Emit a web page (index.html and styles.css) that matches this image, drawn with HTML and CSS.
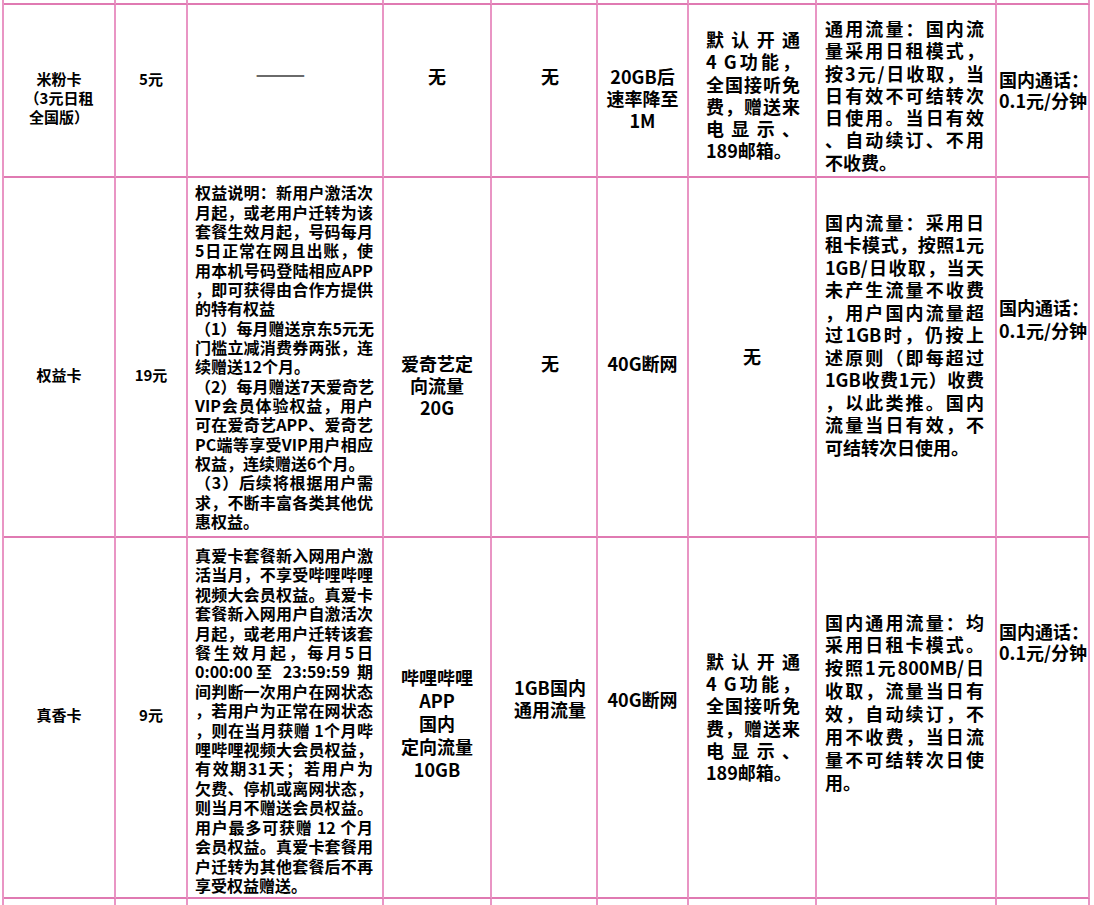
FILE: index.html
```html
<!DOCTYPE html>
<html lang="zh-CN">
<head>
<meta charset="utf-8">
<title>套餐资费说明</title>
<link rel="stylesheet" href="styles.css">
</head>
<body>
<div class="sheet">
  <div class="row edge-top">
    <div class="cell"></div><div class="cell"></div><div class="cell"></div><div class="cell"></div><div class="cell"></div><div class="cell"></div><div class="cell"></div><div class="cell"></div><div class="cell"></div>
  </div>

  <div class="row r1">
    <div class="cell c-name"><span class="ln">米粉卡</span><span class="ln">（3元日租</span><span class="ln">全国版）</span></div>
    <div class="cell c-fee">5元</div>
    <div class="cell c-rights"><span class="dash">——</span></div>
    <div class="cell c-dir">无</div>
    <div class="cell c-gen">无</div>
    <div class="cell c-limit"><span class="ln">20GB后</span><span class="ln">速率降至</span><span class="ln">1M</span></div>
    <div class="cell c-serv">
      <span class="ln j">默认开通</span>
      <span class="ln j">4 G功能，</span>
      <span class="ln j">全国接听免</span>
      <span class="ln j">费，赠送来</span>
      <span class="ln j">电显示、</span>
      <span class="ln">189邮箱。</span>
    </div>
    <div class="cell c-over">
      <span class="ln j">通用流量：国内流</span>
      <span class="ln j">量采用日租模式，</span>
      <span class="ln j">按3元/日收取，当</span>
      <span class="ln j">日有效不可结转次</span>
      <span class="ln j">日使用。当日有效</span>
      <span class="ln j">、自动续订、不用</span>
      <span class="ln">不收费。</span>
    </div>
    <div class="cell c-call"><span class="ln">国内通话：</span><span class="ln">0.1元/分钟</span></div>
  </div>

  <div class="row r2">
    <div class="cell c-name">权益卡</div>
    <div class="cell c-fee">19元</div>
    <div class="cell c-rights">
      <span class="ln j">权益说明：新用户激活次</span>
      <span class="ln j">月起，或老用户迁转为该</span>
      <span class="ln j">套餐生效月起，号码每月</span>
      <span class="ln j">5日正常在网且出账，使</span>
      <span class="ln j">用本机号码登陆相应APP</span>
      <span class="ln j">，即可获得由合作方提供</span>
      <span class="ln">的特有权益</span>
      <span class="ln j">（1）每月赠送京东5元无</span>
      <span class="ln j">门槛立减消费券两张，连</span>
      <span class="ln">续赠送12个月。</span>
      <span class="ln j">（2）每月赠送7天爱奇艺</span>
      <span class="ln j">VIP会员体验权益，用户</span>
      <span class="ln j">可在爱奇艺APP、爱奇艺</span>
      <span class="ln j">PC端等享受VIP用户相应</span>
      <span class="ln">权益，连续赠送6个月。</span>
      <span class="ln j">（3）后续将根据用户需</span>
      <span class="ln j">求，不断丰富各类其他优</span>
      <span class="ln">惠权益。</span>
    </div>
    <div class="cell c-dir"><span class="ln">爱奇艺定</span><span class="ln">向流量</span><span class="ln">20G</span></div>
    <div class="cell c-gen">无</div>
    <div class="cell c-limit">40G断网</div>
    <div class="cell c-serv c-serv-none">无</div>
    <div class="cell c-over">
      <span class="ln j">国内流量：采用日</span>
      <span class="ln j">租卡模式，按照1元</span>
      <span class="ln j">1GB/日收取，当天</span>
      <span class="ln j">未产生流量不收费</span>
      <span class="ln j">，用户国内流量超</span>
      <span class="ln j">过1GB时，仍按上</span>
      <span class="ln j">述原则（即每超过</span>
      <span class="ln j">1GB收费1元）收费</span>
      <span class="ln j">，以此类推。国内</span>
      <span class="ln j">流量当日有效，不</span>
      <span class="ln">可结转次日使用。</span>
    </div>
    <div class="cell c-call"><span class="ln">国内通话：</span><span class="ln">0.1元/分钟</span></div>
  </div>

  <div class="row r3">
    <div class="cell c-name">真香卡</div>
    <div class="cell c-fee">9元</div>
    <div class="cell c-rights">
      <span class="ln j">真爱卡套餐新入网用户激</span>
      <span class="ln j">活当月，不享受哔哩哔哩</span>
      <span class="ln j">视频大会员权益。真爱卡</span>
      <span class="ln j">套餐新入网用户自激活次</span>
      <span class="ln j">月起，或老用户迁转该套</span>
      <span class="ln j">餐生效月起，每月5日</span>
      <span class="ln j">0:00:00至 23:59:59 期</span>
      <span class="ln j">间判断一次用户在网状态</span>
      <span class="ln j">，若用户为正常在网状态</span>
      <span class="ln j">，则在当月获赠 1个月哔</span>
      <span class="ln j">哩哔哩视频大会员权益，</span>
      <span class="ln j">有效期31天；若用户为</span>
      <span class="ln j">欠费、停机或离网状态，</span>
      <span class="ln j">则当月不赠送会员权益。</span>
      <span class="ln j">用户最多可获赠 12 个月</span>
      <span class="ln j">会员权益。真爱卡套餐用</span>
      <span class="ln j">户迁转为其他套餐后不再</span>
      <span class="ln">享受权益赠送。</span>
    </div>
    <div class="cell c-dir"><span class="ln">哔哩哔哩</span><span class="ln">APP</span><span class="ln">国内</span><span class="ln">定向流量</span><span class="ln">10GB</span></div>
    <div class="cell c-gen"><span class="ln">1GB国内</span><span class="ln">通用流量</span></div>
    <div class="cell c-limit">40G断网</div>
    <div class="cell c-serv">
      <span class="ln j">默认开通</span>
      <span class="ln j">4 G功能，</span>
      <span class="ln j">全国接听免</span>
      <span class="ln j">费，赠送来</span>
      <span class="ln j">电显示、</span>
      <span class="ln">189邮箱。</span>
    </div>
    <div class="cell c-over">
      <span class="ln j">国内通用流量：均</span>
      <span class="ln j">采用日租卡模式。</span>
      <span class="ln j">按照1元800MB/日</span>
      <span class="ln j">收取，流量当日有</span>
      <span class="ln j">效，自动续订，不</span>
      <span class="ln j">用不收费，当日流</span>
      <span class="ln j">量不可结转次日使</span>
      <span class="ln">用。</span>
    </div>
    <div class="cell c-call"><span class="ln">国内通话：</span><span class="ln">0.1元/分钟</span></div>
  </div>

  <div class="row edge-bottom">
    <div class="cell"></div><div class="cell"></div><div class="cell"></div><div class="cell"></div><div class="cell"></div><div class="cell"></div><div class="cell"></div><div class="cell"></div><div class="cell"></div>
  </div>
</div>
</body>
</html>
```

FILE: styles.css
```css
html, body {
  margin: 0;
  padding: 0;
  background: #ffffff;
}

body {
  height: 905px;
  overflow: hidden;
  font-family: "Noto Sans CJK SC", "Noto Sans", sans-serif;
  font-weight: 700;
  color: #000000;
  text-spacing-trim: space-all;
  text-autospace: no-autospace;
}

.sheet {
  display: grid;
  grid-template-columns: 112px 72px 196px 108px 106px 91px 128px 180px 93px;
  grid-template-rows: 5px 173px 360px 361px 40px;
  width: max-content;
  margin-left: 2px;
  border-left: 2px solid #e995c4;
}

.row {
  display: contents;
}

.cell {
  box-sizing: border-box;
  min-width: 0;
  border-right: 2px solid #e995c4;
  border-bottom: 2px solid #e07ab2;
  font-size: 18px;
  line-height: 22px;
}

.edge-bottom .cell {
  border-bottom: none;
}

.ln {
  display: block;
  white-space: nowrap;
}

.j {
  text-align: justify;
  text-align-last: justify;
}

/* columns */
.c-name,
.c-fee {
  font-size: 15px;
  line-height: 19px;
  text-align: center;
}

.c-rights {
  font-size: 16px;
  line-height: 19.4px;
  padding: 0 9px 0 7px;
}

.c-dir,
.c-limit {
  text-align: center;
}

.c-gen {
  text-align: center;
  padding-left: 12px;
}

.c-serv {
  padding: 0 15px 0 17px;
}

.c-serv-none {
  text-align: center;
  padding: 0;
}

.c-over {
  padding: 0 11px 0 8px;
}

.c-call {
  padding-left: 2px;
  white-space: nowrap;
}

.dash {
  display: block;
  text-align: center;
  font-size: 30px;
  line-height: 24px;
  font-weight: 400;
  color: #6a6a6a;
}

/* row 1 : 米粉卡 */
.r1 > .c-name { padding-top: 64px; }
.r1 > .c-fee { padding-top: 64px; }
.r1 > .c-rights { padding-top: 54px; padding-left: 0; }
.r1 > .c-dir,
.r1 > .c-gen,
.r1 > .c-limit { padding-top: 60px; }
.r1 > .c-serv { padding-top: 23px; line-height: 22.3px; }
.r1 > .c-over { padding-top: 12px; line-height: 22.3px; }
.r1 > .c-call { padding-top: 63.5px; line-height: 21px; }

/* row 2 : 权益卡 */
.r2 > .c-name,
.r2 > .c-fee { padding-top: 186.5px; }
.r2 > .c-rights { padding-top: 5.3px; line-height: 19.35px; }
.r2 > .c-dir,
.r2 > .c-gen,
.r2 > .c-limit { padding-top: 174px; }
.r2 > .c-serv { padding-top: 167px; }
.r2 > .c-over { padding-top: 32.8px; line-height: 22.5px; }
.r2 > .c-call { padding-top: 117.5px; line-height: 23px; }

/* row 3 : 真香卡 */
.r3 > .c-name,
.r3 > .c-fee { padding-top: 166.5px; }
.r3 > .c-rights { padding-top: 8px; line-height: 19.4px; }
.r3 > .c-dir { padding-top: 127.5px; line-height: 23px; }
.r3 > .c-gen { padding-top: 138px; }
.r3 > .c-limit { padding-top: 150px; }
.r3 > .c-serv { padding-top: 112px; line-height: 22.2px; }
.r3 > .c-over { padding-top: 72.5px; line-height: 22.9px; }
.r3 > .c-call { padding-top: 82.5px; line-height: 21px; }
```
